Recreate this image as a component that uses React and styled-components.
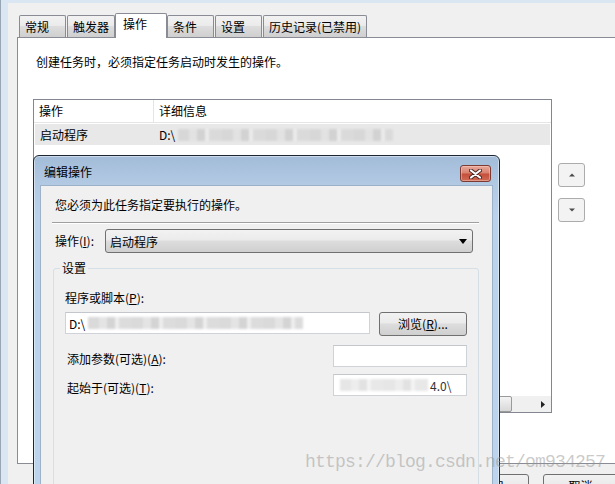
import styled, { createGlobalStyle } from "styled-components"

const GlobalStyle = createGlobalStyle`
  html, body { margin: 0; padding: 0; background: #f0f0f0; }
  body {
    font-family: "Noto Sans CJK SC", "Microsoft YaHei", sans-serif;
    font-size: 12px;
    color: #000;
  }
`

const tabs = ["常规", "触发器", "操作", "条件", "设置", "历史记录(已禁用)"]

export default function App() {
  return (
    <>
      <GlobalStyle />
      <Screen>
        <LeftFrame />
        <Main>
          <TopStrip />
          <Body>
            <TabBar>
              {tabs.map((t) => (
                <Tab key={t} $active={t === "操作"}>
                  {t}
                </Tab>
              ))}
            </TabBar>
            <Panel>
              <PanelText>创建任务时，必须指定任务启动时发生的操作。</PanelText>
              <ListArea>
                <ListBox>
                  <ListHeader>
                    <HeaderCell $w={120}>操作</HeaderCell>
                    <HeaderCell>详细信息</HeaderCell>
                  </ListHeader>
                  <ListRow>
                    <RowCell $w={120}>启动程序</RowCell>
                    <RowCell>
                      D:\<Smear $w={215} />
                    </RowCell>
                  </ListRow>
                  <ListFill />
                  <HScroll>
                    <Thumb />
                    <Track />
                    <ScrollArrow>
                      <svg width="4" height="7" viewBox="0 0 4 7">
                        <polygon points="0,0 4,3.5 0,7" fill="#222" />
                      </svg>
                    </ScrollArrow>
                  </HScroll>
                </ListBox>
                <SideButtons>
                  <SideButton>
                    <svg width="6" height="4" viewBox="0 0 6 4">
                      <polygon points="0,3.5 3,0.5 6,3.5" fill="#4a4a4a" />
                    </svg>
                  </SideButton>
                  <SideButton>
                    <svg width="6" height="4" viewBox="0 0 6 4">
                      <polygon points="0,0.5 3,3.5 6,0.5" fill="#4a4a4a" />
                    </svg>
                  </SideButton>
                </SideButtons>
              </ListArea>
            </Panel>
            <ButtonRow>
              <WinButton>确定</WinButton>
              <WinButton>取消</WinButton>
            </ButtonRow>
          </Body>
        </Main>

        <Dialog>
          <TitleBar>
            <TitleText>编辑操作</TitleText>
            <CloseButton>
              <svg width="13" height="10" viewBox="0 0 13 10">
                <path d="M2 1.5 L11 8.5 M11 1.5 L2 8.5" stroke="#4b2520" strokeWidth="4" strokeLinecap="round" />
                <path d="M2 1.5 L11 8.5 M11 1.5 L2 8.5" stroke="#fff" strokeWidth="2.2" strokeLinecap="round" />
              </svg>
            </CloseButton>
          </TitleBar>
          <Client>
            <Intro>您必须为此任务指定要执行的操作。</Intro>
            <Separator />
            <SelectRow>
              <FieldLabel $w={50}>
                操作(<u>I</u>):
              </FieldLabel>
              <DropDown>
                <span>启动程序</span>
                <svg width="8" height="5" viewBox="0 0 8 5">
                  <polygon points="0,0 8,0 4,5" fill="#000" />
                </svg>
              </DropDown>
            </SelectRow>
            <Group>
              <Legend>设置</Legend>
              <GroupBody>
                <FieldLabel>
                  程序或脚本(<u>P</u>):
                </FieldLabel>
                <PathRow>
                  <TextBox $w={305}>
                    D:\<Smear $w={215} />
                  </TextBox>
                  <BrowseButton>
                    浏览(<u>R</u>)...
                  </BrowseButton>
                </PathRow>
                <OptionRow $gap={9}>
                  <FieldLabel>
                    添加参数(可选)(<u>A</u>):
                  </FieldLabel>
                  <TextBox $w={134} />
                </OptionRow>
                <OptionRow $gap={7}>
                  <FieldLabel>
                    起始于(可选)(<u>T</u>):
                  </FieldLabel>
                  <TextBox $w={134}>
                    <Smear $w={88} $light />
                    <Faded>4.0\</Faded>
                  </TextBox>
                </OptionRow>
              </GroupBody>
            </Group>
          </Client>
        </Dialog>

        <Watermark>https://blog.csdn.net/om934257</Watermark>
      </Screen>
    </>
  )
}

const Screen = styled.div`
  position: relative;
  width: 615px;
  height: 484px;
  overflow: hidden;
  display: flex;
  align-items: flex-start;
  background: #f0f0f0;
`

const LeftFrame = styled.div`
  flex: none;
  align-self: stretch;
  width: 7px;
  border-left: 1px solid #98a5b4;
  background: #dbe6f3;
`

const Main = styled.div`
  flex: none;
  width: 632px;
  display: flex;
  flex-direction: column;
`

const TopStrip = styled.div`
  flex: none;
  height: 3px;
  background: #dbe6f3;
`

const Body = styled.div`
  flex: none;
  padding: 10px 0 0 9px;
  display: flex;
  flex-direction: column;
`

const TabBar = styled.div`
  flex: none;
  height: 24px;
  display: flex;
  align-items: flex-end;
  gap: 1px;
  padding-left: 2px;
`

const Tab = styled.div`
  position: relative;
  z-index: ${(p) => (p.$active ? 2 : 0)};
  box-sizing: border-box;
  min-width: ${(p) => (p.$active ? "52px" : "47px")};
  height: ${(p) => (p.$active ? "25px" : "22px")};
  margin: ${(p) => (p.$active ? "0 -1px -1px" : "0")};
  padding: 0 ${(p) => (p.$active ? "7px" : "5px")};
  border: 1px solid #898c95;
  border-bottom: none;
  border-radius: 2px 2px 0 0;
  line-height: ${(p) => (p.$active ? "20px" : "21px")};
  white-space: nowrap;
  background: ${(p) =>
    p.$active
      ? "#fff"
      : "linear-gradient(#f2f2f2 0%, #ebebeb 45%, #dddddd 50%, #cfcfcf 100%)"};
`

const Panel = styled.div`
  position: relative;
  z-index: 1;
  flex: none;
  box-sizing: border-box;
  height: 427px;
  padding: 16px 0 0 15px;
  border: 1px solid #898c95;
  background: #fff;
`

const PanelText = styled.div`
  margin-left: 3px;
  line-height: 16px;
`

const ListArea = styled.div`
  margin-top: 29px;
  display: flex;
  align-items: flex-start;
  gap: 6px;
`

const ListBox = styled.div`
  box-sizing: border-box;
  width: 519px;
  height: 314px;
  border: 1px solid #828790;
  display: flex;
  flex-direction: column;
`

const ListHeader = styled.div`
  flex: none;
  height: 22px;
  display: flex;
  border-bottom: 1px solid #e5e5e5;
`

const HeaderCell = styled.div`
  box-sizing: border-box;
  ${(p) => (p.$w ? `width: ${p.$w}px; border-right: 1px solid #e5e5e5;` : "flex: 1;")}
  padding-left: 5px;
  line-height: 22px;
`

const ListRow = styled.div`
  flex: none;
  height: 21px;
  margin: 1px 1px 0;
  display: flex;
  align-items: center;
  background: #e8e8e8;
`

const RowCell = styled.div`
  box-sizing: border-box;
  ${(p) => (p.$w ? `width: ${p.$w - 1}px;` : "flex: 1;")}
  padding-left: 5px;
  display: flex;
  align-items: center;
  white-space: nowrap;
`

const Smear = styled.span`
  display: inline-block;
  width: ${(p) => p.$w}px;
  height: 12px;
  margin-left: 3px;
  opacity: ${(p) => (p.$light ? 0.6 : 0.9)};
  filter: blur(1.2px);
  background: repeating-linear-gradient(
    90deg,
    #d6d6d6 0 11px,
    #e2e2e2 11px 19px,
    #d0d0d0 19px 27px,
    #ececec 27px 31px,
    #d9d9d9 31px 44px
  );
`

const ListFill = styled.div`
  flex: 1;
`

const HScroll = styled.div`
  flex: none;
  height: 16px;
  display: flex;
  background: #f0f0f0;
`

const Thumb = styled.div`
  width: 478px;
  box-sizing: border-box;
  border: 1px solid #9a9a9a;
  border-radius: 2px;
  background: linear-gradient(#f4f4f4, #d8d8d8);
`

const Track = styled.div`
  flex: 1;
`

const ScrollArrow = styled.div`
  width: 17px;
  display: flex;
  align-items: center;
  justify-content: center;
`

const SideButtons = styled.div`
  margin-top: 64px;
  display: flex;
  flex-direction: column;
  gap: 11px;
`

const SideButton = styled.div`
  box-sizing: border-box;
  width: 27px;
  height: 24px;
  border: 1px solid #acacac;
  border-radius: 3px;
  background: #f3f3f3;
  display: flex;
  align-items: center;
  justify-content: center;
`

const ButtonRow = styled.div`
  flex: none;
  display: flex;
  justify-content: flex-end;
  gap: 14px;
  padding: 10px 22px 0 0;
`

const WinButton = styled.div`
  box-sizing: border-box;
  width: 75px;
  height: 23px;
  border: 1px solid #707070;
  border-radius: 3px;
  background: linear-gradient(#f2f2f2 0%, #ebebeb 45%, #dddddd 50%, #cfcfcf 100%);
  text-align: center;
  line-height: 21px;
`

const Dialog = styled.div`
  position: absolute;
  left: 33px;
  top: 155px;
  z-index: 5;
  box-sizing: border-box;
  width: 467px;
  height: 360px;
  padding: 0 6px;
  border: 1px solid #1d2733;
  border-radius: 6px 6px 0 0;
  box-shadow: inset 0 0 0 1px rgba(255, 255, 255, 0.45);
  background: linear-gradient(#a2bcd9 0px, #b2c9e3 28px, #bad2eb 60px, #bcd4ed 100%);
  display: flex;
  flex-direction: column;
`

const TitleBar = styled.div`
  flex: none;
  height: 29px;
  display: flex;
  align-items: center;
  justify-content: space-between;
  padding: 0 2px 0 4px;
`

const TitleText = styled.div`
  margin-top: 3px;
  line-height: 16px;
`

const CloseButton = styled.div`
  box-sizing: border-box;
  width: 31px;
  height: 17px;
  margin-top: 6px;
  border: 1px solid #7b3a32;
  border-radius: 3px;
  box-shadow: inset 0 0 0 1px rgba(255, 210, 200, 0.45);
  background: linear-gradient(#e8a99c 0%, #d9826f 45%, #c5503b 55%, #cf6a55 100%);
  display: flex;
  align-items: center;
  justify-content: center;
`

const Client = styled.div`
  flex: 1;
  border: 1px solid #9db2c9;
  border-bottom: none;
  background: #f0f0f0;
  padding: 11px 13px 0 12px;
`

const Intro = styled.div`
  padding-left: 2px;
  line-height: 16px;
`

const Separator = styled.div`
  margin: 9px 0 0 -1px;
  height: 1px;
  background: #a0a0a0;
  border-bottom: 1px solid #fff;
`

const SelectRow = styled.div`
  margin-top: 5px;
  padding: 0 6px 0 2px;
  display: flex;
  align-items: center;
`

const FieldLabel = styled.div`
  ${(p) => (p.$w ? `width: ${p.$w}px; flex: none;` : "")}
  line-height: 16px;
  white-space: nowrap;
  u { text-decoration-thickness: 1px; text-underline-offset: 1px; }
`

const DropDown = styled.div`
  flex: 1;
  box-sizing: border-box;
  height: 24px;
  padding: 0 5px 0 4px;
  border: 1px solid #707070;
  border-radius: 3px;
  background: linear-gradient(#f2f2f2 0%, #ebebeb 45%, #dddddd 50%, #cfcfcf 100%);
  display: flex;
  align-items: center;
  justify-content: space-between;
`

const Group = styled.fieldset`
  margin: 8px 0 0;
  padding: 0 11px 0;
  border: 1px solid #d5dfe5;
  border-radius: 3px;
  min-height: 260px;
`

const Legend = styled.legend`
  margin-left: -5px;
  padding: 0 2px;
  line-height: 14px;
`

const GroupBody = styled.div`
  padding-top: 15px;
  display: flex;
  flex-direction: column;
`

const PathRow = styled.div`
  margin-top: 6px;
  display: flex;
  justify-content: space-between;
  align-items: flex-start;
`

const TextBox = styled.div`
  box-sizing: border-box;
  width: ${(p) => p.$w}px;
  height: 22px;
  padding: 0 3px;
  border: 1px solid #cfd3d8;
  border-top-color: #c3c6cb;
  background: #fff;
  display: flex;
  align-items: center;
  white-space: nowrap;
  overflow: hidden;
`

const Faded = styled.span`
  margin-left: 2px;
  color: #333;
`

const BrowseButton = styled.div`
  box-sizing: border-box;
  width: 88px;
  height: 24px;
  border: 1px solid #707070;
  border-radius: 3px;
  background: linear-gradient(#f2f2f2 0%, #ebebeb 45%, #dddddd 50%, #cfcfcf 100%);
  text-align: center;
  line-height: 22px;
  u { text-underline-offset: 1px; }
`

const OptionRow = styled.div`
  margin-top: ${(p) => p.$gap}px;
  padding-left: 2px;
  display: flex;
  justify-content: space-between;
  align-items: flex-end;
`

const Watermark = styled.div`
  position: absolute;
  left: 305px;
  top: 452px;
  z-index: 10;
  font-family: "Liberation Mono", monospace;
  font-size: 18px;
  letter-spacing: -0.8px;
  color: rgba(150, 150, 150, 0.5);
  white-space: nowrap;
`
